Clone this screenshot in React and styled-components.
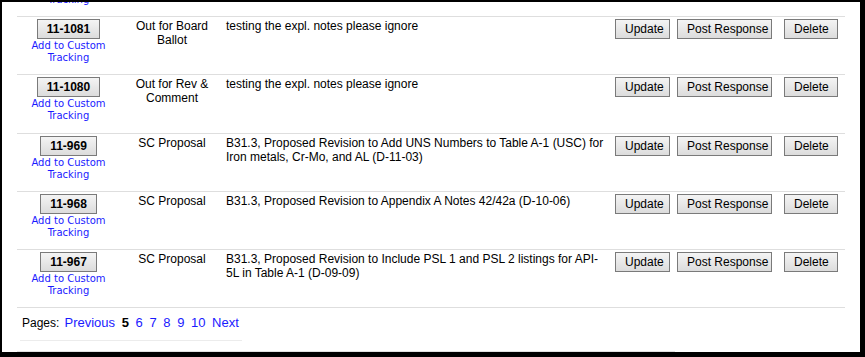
import React from 'react';
import styled, { createGlobalStyle } from 'styled-components';

const GlobalStyle = createGlobalStyle`
  html, body {
    margin: 0;
    padding: 0;
    background: #000;
  }
  body {
    width: 865px;
    height: 357px;
    overflow: hidden;
    font-family: "Liberation Sans", Arial, sans-serif;
  }
`;

const rows = [
  {
    id: '11-1082',
    status: 'Out for Board Ballot',
    desc: 'testing the expl. notes please ignore',
  },
  {
    id: '11-1081',
    status: 'Out for Board Ballot',
    desc: 'testing the expl. notes please ignore',
  },
  {
    id: '11-1080',
    status: 'Out for Rev & Comment',
    desc: 'testing the expl. notes please ignore',
  },
  {
    id: '11-969',
    status: 'SC Proposal',
    desc: 'B31.3, Proposed Revision to Add UNS Numbers to Table A-1 (USC) for Iron metals, Cr-Mo, and AL (D-11-03)',
  },
  {
    id: '11-968',
    status: 'SC Proposal',
    desc: 'B31.3, Proposed Revision to Appendix A Notes 42/42a (D-10-06)',
  },
  {
    id: '11-967',
    status: 'SC Proposal',
    desc: (
      <>
        B31.3, Proposed Revision to Include PSL 1 and PSL 2 listings for API-<wbr />5L in Table A-1 (D-09-09)
      </>
    ),
  },
];

const pages = ['6', '7', '8', '9', '10'];

const App = () => {
  return (
    <>
      <GlobalStyle />
      <Panel>
        <List>
          {rows.map((r) => (
            <Row key={r.id}>
              <IdCell>
                <GrayButton $bold>{r.id}</GrayButton>
                <TrackLink href="#">Add to Custom Tracking</TrackLink>
              </IdCell>
              <StatusCell>{r.status}</StatusCell>
              <DescCell>{r.desc}</DescCell>
              <Actions>
                <GrayButton $width={55}>Update</GrayButton>
                <GrayButton $width={95}>Post Response</GrayButton>
                <GrayButton $width={54} $gap={5}>Delete</GrayButton>
              </Actions>
            </Row>
          ))}
        </List>
        <Pager>
          <Label>Pages:</Label> <PageLink href="#">Previous</PageLink>{' '}
          <Current>5</Current>{' '}
          {pages.map((p) => (
            <React.Fragment key={p}>
              <PageLink href="#">{p}</PageLink>{' '}
            </React.Fragment>
          ))}
          <PageLink href="#">Next</PageLink>
        </Pager>
        <FootLine />
      </Panel>
    </>
  );
};

const Panel = styled.div`
  margin: 2px 5px 0 2px;
  height: 350px;
  background: #fff;
  overflow: hidden;
`;

const List = styled.div`
  margin: -43px 0 0 15px;
  width: 828px;
`;

const Row = styled.div`
  display: grid;
  grid-template-columns: 103px 104px 388px 1fr;
  height: 57.2px;
  border-bottom: 1px solid #dedede;
  font-size: 12px;
  line-height: 14px;
  color: #000;
`;

const IdCell = styled.div`
  display: flex;
  flex-direction: column;
  align-items: center;
  padding-top: 2px;
`;

const GrayButton = styled.button`
  box-sizing: border-box;
  flex-shrink: 0;
  height: 20px;
  width: ${(p) => (p.$width ? `${p.$width}px` : 'auto')};
  margin-left: ${(p) => (p.$gap ? `${p.$gap}px` : '0')};
  padding: 0 9px;
  border: 1px solid #7a7a7a;
  border-radius: 0;
  background: linear-gradient(#f4f4f4, #dcdcdc);
  font-family: "Liberation Sans", Arial, sans-serif;
  font-size: 12px;
  font-weight: ${(p) => (p.$bold ? 700 : 400)};
  color: #000;
  line-height: 18px;
  cursor: pointer;
  white-space: nowrap;
`;

const TrackLink = styled.a`
  width: 90px;
  margin-top: 1px;
  text-align: center;
  font-family: "DejaVu Sans", Verdana, sans-serif;
  font-size: 10px;
  line-height: 12px;
  color: #1a1aff;
  text-decoration: none;
`;

const StatusCell = styled.div`
  padding: 2px 4px 0;
  text-align: center;
`;

const DescCell = styled.div`
  padding: 2px 2px 0;
`;

const Actions = styled.div`
  display: flex;
  align-items: flex-start;
  gap: 7px;
  padding: 2px 0 0 3px;
`;

const Pager = styled.div`
  display: inline-block;
  margin-left: 18px;
  padding: 7px 2px 9px;
  border-bottom: 1px solid #ececec;
  font-size: 13px;
  line-height: 15px;
  color: #000;
`;

const Label = styled.span`
  font-size: 12px;
`;

const PageLink = styled.a`
  margin: 0 1.5px;
  color: #1a1aff;
  text-decoration: none;
`;

const Current = styled.b`
  margin: 0 1.5px;
`;

const FootLine = styled.div`
  margin: 10px 0 0 15px;
  width: 658px;
  border-top: 1px solid #e0e0e0;
`;

export default App;
